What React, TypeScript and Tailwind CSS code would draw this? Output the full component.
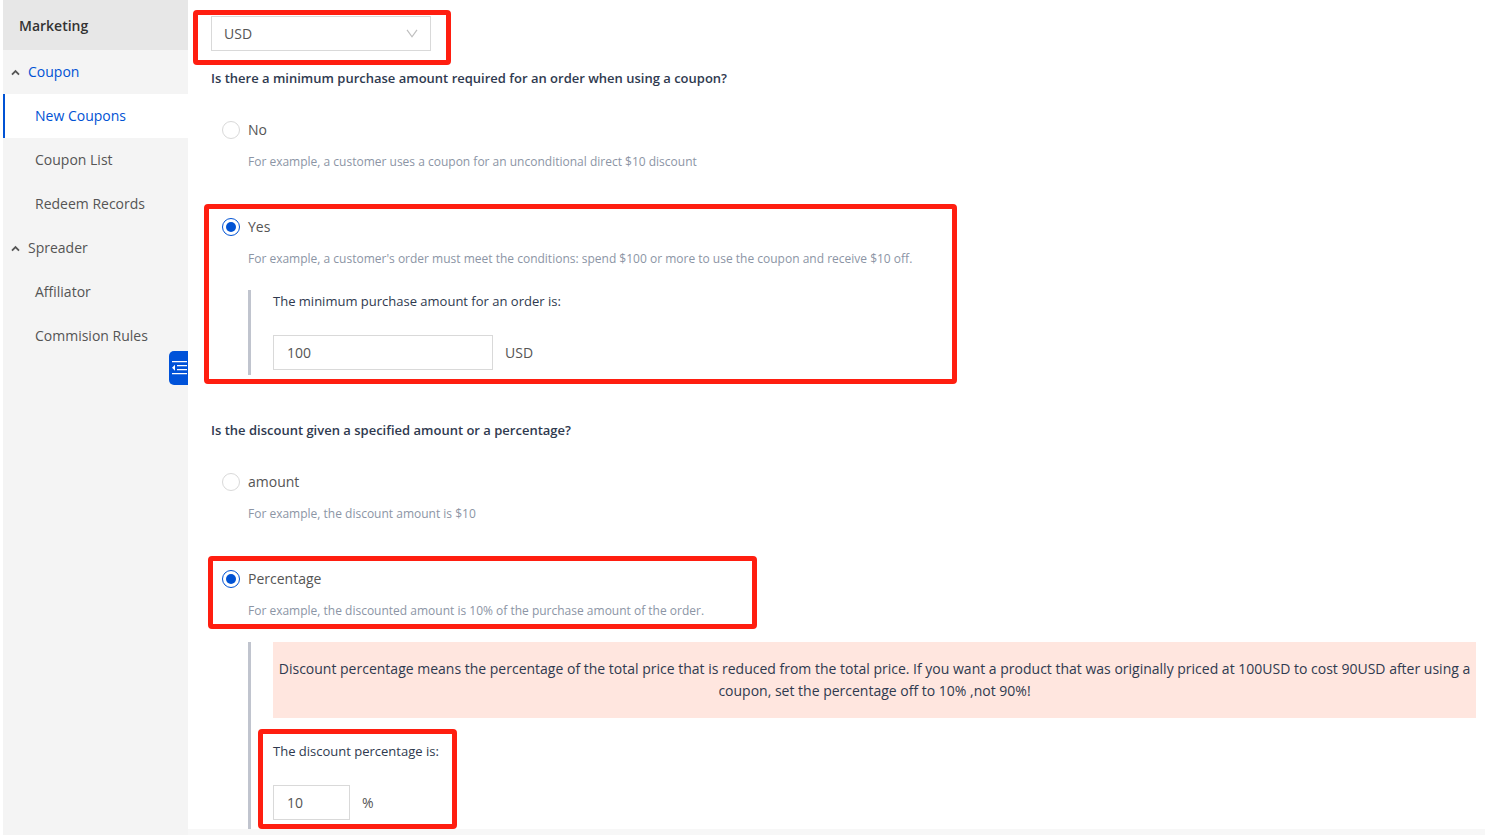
import { useState, type ReactNode } from "react";
import { clsx } from "clsx";

const menu = [
  { title: "Coupon", active: true, items: ["New Coupons", "Coupon List", "Redeem Records"] },
  { title: "Spreader", active: false, items: ["Affiliator", "Commision Rules"] },
];

function Sidebar() {
  return (
    <aside className="relative ml-[3px] w-[185px] shrink-0 bg-[#f4f4f4] text-[#555]">
      <h2 className="flex h-[50px] items-center bg-[#e7e7e7] px-4 pt-0.5 text-sm font-semibold text-[#333]">
        Marketing
      </h2>
      <nav>
        {menu.map((group) => (
          <div key={group.title}>
            <button
              type="button"
              className={clsx(
                "flex h-11 w-full items-center gap-2 pl-2 text-sm",
                group.active && "text-[#0052d4]",
              )}
            >
              <svg width="9" height="7" viewBox="0 0 9 7" fill="none" stroke="#555" strokeWidth="1.8">
                <path d="M1 5.6 4.5 2 8 5.6" />
              </svg>
              {group.title}
            </button>
            {group.items.map((item) => (
              <a
                key={item}
                href="#"
                className={clsx(
                  "flex h-11 items-center border-l-2 pl-[30px] text-sm",
                  item === "New Coupons"
                    ? "border-[#0052d4] bg-white text-[#0052d4]"
                    : "border-transparent",
                )}
              >
                {item}
              </a>
            ))}
          </div>
        ))}
      </nav>
      <button
        type="button"
        aria-label="Collapse menu"
        className="absolute top-[351px] right-0 flex h-[34px] w-[19px] items-center justify-end rounded-l-[5px] bg-[#0052d9] pr-px"
      >
        <svg width="15" height="14" viewBox="0 0 15 14" fill="#fff">
          <path d="M0 0h15v1.3H0zM5 4h10v1.3H5zM5 8h10v1.3H5zM0 12h15v1.3H0zM0 6.7 3 3.7v6z" />
        </svg>
      </button>
    </aside>
  );
}

function Highlight({ className }: { className: string }) {
  return (
    <div
      className={clsx("pointer-events-none absolute rounded-[4px] border-5 border-[#ff1e10]", className)}
    />
  );
}

type OptionProps = {
  name: string;
  label: string;
  hint: string;
  checked: boolean;
  onSelect: () => void;
  children?: ReactNode;
};

function Option({ name, label, hint, checked, onSelect, children }: OptionProps) {
  return (
    <div className="relative pl-[37px]">
      <label className="-ml-[26px] flex items-center gap-2 text-sm leading-[22px] text-[#555]">
        <input
          type="radio"
          name={name}
          checked={checked}
          onChange={onSelect}
          className="size-[18px] appearance-none rounded-full border border-[#d9d9d9] bg-white bg-clip-content p-[3px] checked:border-[#0052d4] checked:bg-[#0052d4]"
        />
        {label}
      </label>
      <p className="mt-[10px] text-xs leading-[22px] text-[#8c95a5]">{hint}</p>
      {children}
    </div>
  );
}

export default function App() {
  const [minimum, setMinimum] = useState("yes");
  const [discount, setDiscount] = useState("percentage");

  return (
    <div className="flex min-h-screen bg-white font-['Open_Sans','Noto_Sans',sans-serif] text-sm text-[#2f3a4f]">
      <Sidebar />
      <div className="flex min-w-0 flex-1 flex-col bg-[#f7f7f7]">
        <main className="bg-white pt-4 pr-[9px] pl-[23px]">
          <div className="relative w-[220px]">
            <select
              aria-label="Currency"
              className="block h-[35px] w-full appearance-none border border-[#d9d9d9] bg-white px-3 text-sm text-[#555]"
            >
              <option>USD</option>
            </select>
            <svg
              className="pointer-events-none absolute top-[13px] right-[13px]"
              width="12"
              height="9"
              viewBox="0 0 12 9"
              fill="none"
              stroke="#bfbfbf"
              strokeWidth="1.2"
            >
              <path d="M1 .8 6 7.8 11 .8" />
            </svg>
            <Highlight className="-top-[6px] -right-5 -bottom-[14px] -left-[18px]" />
          </div>

          <h3 className="mt-4 text-[13px] leading-[22px] font-semibold">
            Is there a minimum purchase amount required for an order when using a coupon?
          </h3>
          <div className="mt-[30px] flex flex-col gap-[43px]">
            <Option
              name="minimum"
              label="No"
              hint="For example, a customer uses a coupon for an unconditional direct $10 discount"
              checked={minimum === "no"}
              onSelect={() => setMinimum("no")}
            />
            <Option
              name="minimum"
              label="Yes"
              hint="For example, a customer's order must meet the conditions: spend $100 or more to use the coupon and receive $10 off."
              checked={minimum === "yes"}
              onSelect={() => setMinimum("yes")}
            >
              <div className="mt-5 border-l-3 border-[#c0c4ce] pb-[5px] pl-[22px]">
                <label htmlFor="min-amount" className="block text-[13px] leading-[22px]">
                  The minimum purchase amount for an order is:
                </label>
                <div className="mt-[23px] flex items-center gap-3 text-[#555]">
                  <input
                    id="min-amount"
                    defaultValue="100"
                    className="h-[35px] w-[220px] border border-[#d9d9d9] px-[13px]"
                  />
                  USD
                </div>
              </div>
              <Highlight className="-top-3 -bottom-[9px] -left-[7px] w-[753px]" />
            </Option>
          </div>

          <h3 className="mt-11 text-[13px] leading-[22px] font-semibold">
            Is the discount given a specified amount or a percentage?
          </h3>
          <div className="mt-[30px] flex flex-col gap-[43px]">
            <Option
              name="discount"
              label="amount"
              hint="For example, the discount amount is $10"
              checked={discount === "amount"}
              onSelect={() => setDiscount("amount")}
            />
            <Option
              name="discount"
              label="Percentage"
              hint="For example, the discounted amount is 10% of the purchase amount of the order."
              checked={discount === "percentage"}
              onSelect={() => setDiscount("percentage")}
            >
              <div className="mt-5 border-l-3 border-[#c0c4ce] pb-[9px] pl-[22px]">
                <p className="bg-[#ffe6df] px-1 py-4 text-center leading-[22px]">
                  Discount percentage means the percentage of the total price that is reduced from the
                  total price. If you want a product that was originally priced at 100USD to cost 90USD
                  after using a coupon, set the percentage off to 10% ,not 90%!
                </p>
                <div className="relative mt-[22px]">
                  <label htmlFor="percent" className="block text-[13px] leading-[22px]">
                    The discount percentage is:
                  </label>
                  <div className="mt-[23px] flex items-center gap-3 text-[#555]">
                    <input
                      id="percent"
                      defaultValue="10"
                      className="h-[35px] w-[77px] border border-[#d9d9d9] px-[13px]"
                    />
                    %
                  </div>
                  <Highlight className="-top-[11px] -bottom-[9px] -left-[15px] w-[199px]" />
                </div>
              </div>
              <Highlight className="-top-3 -left-[3px] h-[73px] w-[549px]" />
            </Option>
          </div>
        </main>
      </div>
    </div>
  );
}
